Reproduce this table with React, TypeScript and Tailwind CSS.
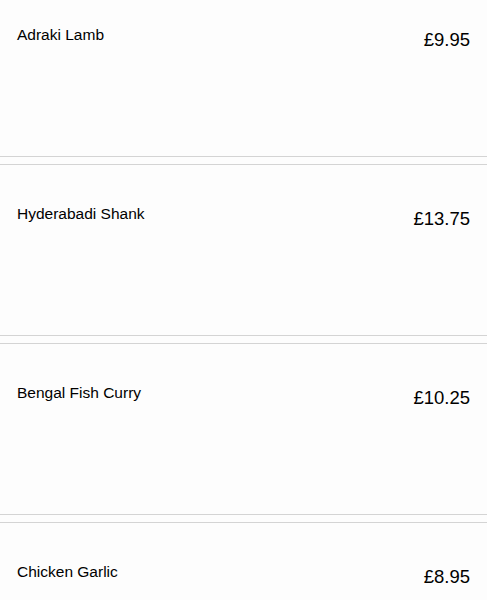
const dishes = [
  { name: "Adraki Lamb", price: "£9.95" },
  { name: "Hyderabadi Shank", price: "£13.75" },
  { name: "Bengal Fish Curry", price: "£10.25" },
  { name: "Chicken Garlic", price: "£8.95" },
];

export default function App() {
  return (
    <div className="h-[600px] w-full overflow-hidden bg-[#fdfdfd] font-['Liberation_Sans',Arial,sans-serif] text-black">
      <div className="-mt-[15px] flex flex-col gap-[7px]">
        {dishes.map((d) => (
          <div
            key={d.name}
            className="h-[172px] border-y border-[#d4d4d4] bg-[#fdfdfd] px-[17px] pt-[40px]"
          >
            <div className="flex items-start justify-between">
              <span className="text-[15.5px] leading-[17px]">{d.name}</span>
              <span className="mt-[3px] text-[18.5px] leading-[21px]">{d.price}</span>
            </div>
          </div>
        ))}
      </div>
    </div>
  );
}
